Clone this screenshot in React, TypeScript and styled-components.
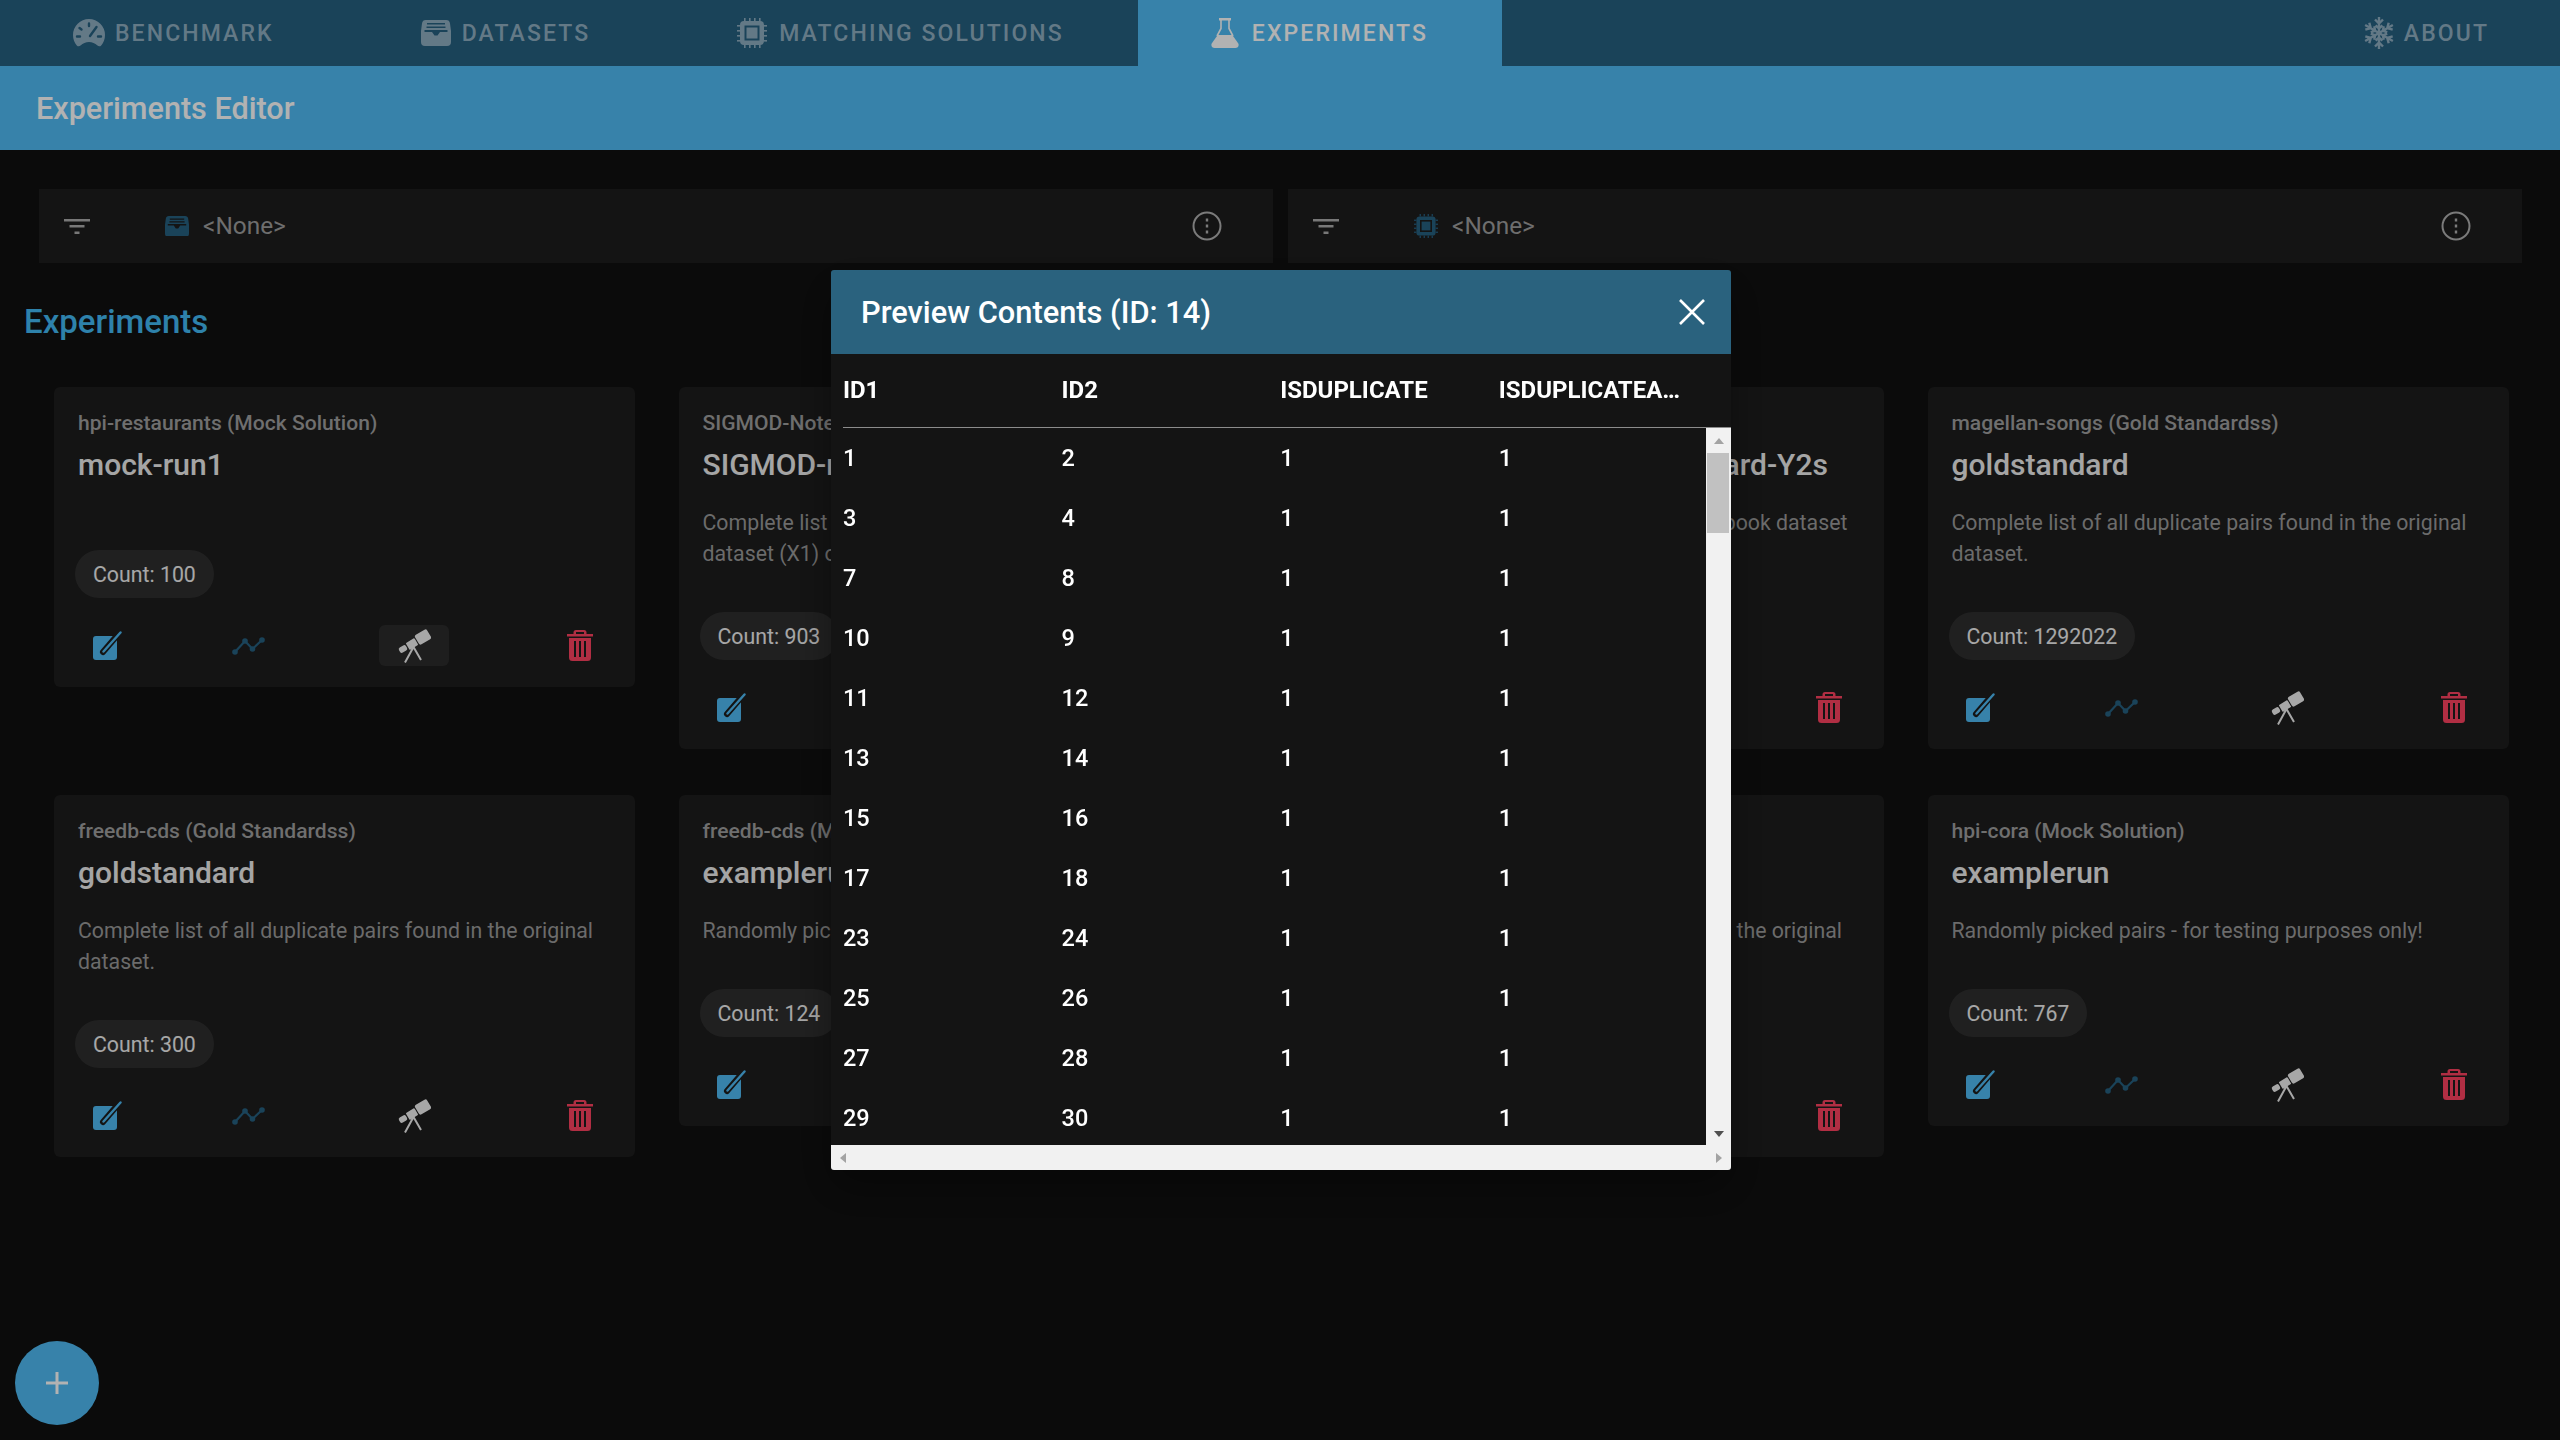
import React, { FC } from 'react'
import styled, { createGlobalStyle } from 'styled-components'

const GlobalStyle = createGlobalStyle`
  html, body {
    margin: 0;
    background: #101010;
    font-family: Roboto, "Liberation Sans", sans-serif;
  }
  * { box-sizing: border-box; }
`

const Page = styled.div`
  position: relative;
  width: 2560px;
  height: 1440px;
  overflow: hidden;
  background: #101010;
`

const Nav = styled.nav`
  display: flex;
  height: 66px;
  background: #266080;
`

const Tab = styled.div<{ $active?: boolean; $right?: boolean; $gap: number }>`
  display: flex;
  align-items: center;
  gap: ${p => p.$gap}px;
  padding: ${p => (p.$right ? '0 71px 0 73px' : '0 74px 0 73px')};
  margin-left: ${p => (p.$right ? 'auto' : '0')};
  background: ${p => (p.$active ? '#4fbbf4' : 'transparent')};
  color: ${p => (p.$active ? '#ffffff' : '#8faec1')};
  font-size: 23px;
  font-weight: 500;
  letter-spacing: 2.1px;
  text-transform: uppercase;
`

const AppBar = styled.header`
  display: flex;
  align-items: center;
  height: 84px;
  padding-left: 36px;
  background: #4fbbf4;
  color: #ffffff;
  font-size: 30.6px;
  font-weight: 500;
`

const FilterRow = styled.div`
  display: grid;
  grid-template-columns: 1234px 1234px;
  gap: 15px;
  margin: 39px 0 0 39px;
`

const FilterBar = styled.div`
  display: flex;
  align-items: center;
  height: 74px;
  padding: 0 51px 0 25px;
  background: #1d1d1d;
  color: #9e9e9e;
  font-size: 24.4px;
`

const FilterLeading = styled.div`
  display: flex;
  width: 101px;
  color: #adadad;
`

const FilterValue = styled.div`
  display: flex;
  align-items: center;
  flex: 1;
  gap: 14px;
`

const FilterLabel = styled.span`
  margin-top: -2px;
`

const SourceIcon = styled.span`
  display: flex;
  color: #266080;
`

const InfoButton = styled.div`
  display: flex;
  color: #b0b0b0;
`

const SectionTitle = styled.h2`
  margin: 39px 0 0 24px;
  color: #42baf5;
  font-size: 33px;
  line-height: 40px;
  font-weight: 500;
`

const CardGrid = styled.div`
  display: grid;
  grid-template-columns: repeat(4, 581px);
  column-gap: 43.5px;
  row-gap: 46px;
  align-items: start;
  margin: 45px 0 0 54px;
`

const Card = styled.article`
  padding: 20px 19px 21px 24px;
  border-radius: 6px;
  background: #1d1d1d;
`

const Overline = styled.div`
  color: #9f9f9f;
  font-size: 21.1px;
  line-height: 32px;
  font-weight: 500;
`

const CardTitle = styled.h3`
  margin: 6px 0 0;
  color: #ededed;
  font-size: 30px;
  line-height: 40px;
  font-weight: 500;
  white-space: nowrap;
`

const Description = styled.p`
  margin: 0;
  padding: 22px 0 43px;
  color: #9a9a9a;
  font-size: 21.3px;
  line-height: 31px;
`

const Chip = styled.div`
  display: inline-flex;
  align-items: center;
  height: 48px;
  margin-left: -3px;
  padding: 0 18px;
  border-radius: 24px;
  background: #2f2f2f;
  color: #f0f0f0;
  font-size: 21.3px;
`

const Actions = styled.div`
  display: grid;
  grid-template-columns: 141px 166px 166px 70px;
  margin: 27px 0 0 -6px;
`

const ActionButton = styled.div<{ $tone: 'edit' | 'chart' | 'view' | 'delete'; $hover?: boolean }>`
  display: flex;
  align-items: center;
  justify-content: center;
  width: 70px;
  height: 41px;
  border-radius: 6px;
  background: ${p => (p.$hover ? '#2b2b2b' : 'transparent')};
  color: ${p =>
    ({ edit: '#4fbbf4', chart: '#266080', view: '#f0f0f0', delete: '#fe4261' })[p.$tone]};
`

const Fab = styled.div`
  position: absolute;
  left: 15px;
  bottom: 15px;
  display: flex;
  align-items: center;
  justify-content: center;
  width: 84px;
  height: 84px;
  border-radius: 50%;
  background: #4fbbf4;
  color: #ffffff;
`

const Backdrop = styled.div`
  position: fixed;
  inset: 0;
  background: rgba(0, 0, 0, 0.3);
`

const Modal = styled.section`
  position: fixed;
  left: 831px;
  top: 270px;
  display: flex;
  flex-direction: column;
  width: 900px;
  height: 900px;
  overflow: hidden;
  border-radius: 3px;
  background: #141414;
  box-shadow: 0 18px 40px rgba(0, 0, 0, 0.35);
`

const ModalHeader = styled.header`
  display: flex;
  align-items: center;
  justify-content: space-between;
  flex: 0 0 84px;
  padding: 0 26px 0 30px;
  background: #2a627e;
  color: #ffffff;
  font-size: 30.8px;
  font-weight: 500;
`

const TableHead = styled.div`
  display: grid;
  grid-template-columns: repeat(4, 218.6px);
  align-items: center;
  flex: 0 0 74px;
  margin-left: 12px;
  padding-bottom: 2px;
  border-bottom: 1px solid #8c8c8c;
  color: #ffffff;
  font-size: 24px;
  font-weight: 700;
`

const HeadCell = styled.div`
  white-space: nowrap;
`

const TableFrame = styled.div`
  display: grid;
  grid-template-columns: 1fr 25px;
  grid-template-rows: 1fr 25px;
  flex: 1;
  min-height: 0;
`

const TableBody = styled.div`
  overflow: hidden;
  padding-left: 12px;
`

const TableRow = styled.div`
  display: grid;
  grid-template-columns: repeat(4, 218.6px);
  align-items: center;
  height: 60px;
  color: #ffffff;
  font-size: 23.5px;
  font-weight: 500;
`

const VScroll = styled.div`
  position: relative;
  display: flex;
  flex-direction: column;
  align-items: center;
  justify-content: space-between;
  padding: 10px 0 8px;
  background: #f1f1f1;
`

const VThumb = styled.div`
  position: absolute;
  top: 25px;
  left: 1px;
  width: 22px;
  height: 80px;
  background: #c1c1c1;
`

const HScroll = styled.div`
  display: flex;
  align-items: center;
  justify-content: space-between;
  grid-column: 1 / 3;
  padding: 0 9px;
  background: #f1f1f1;
`

const arrowWidths = {
  up: '0 5.5px 6px',
  down: '6px 5.5px 0',
  left: '5.5px 6px 5.5px 0',
  right: '5.5px 0 5.5px 6px',
}

const arrowSides = { up: 'bottom', down: 'top', left: 'right', right: 'left' }

const Arrow = styled.span<{ $dir: 'up' | 'down' | 'left' | 'right'; $dark?: boolean }>`
  width: 0;
  height: 0;
  border-style: solid;
  border-color: transparent;
  border-width: ${p => arrowWidths[p.$dir]};
  border-${p => arrowSides[p.$dir]}-color: ${p => (p.$dark ? '#505050' : '#a3a3a3')};
`

const GaugeIcon: FC = () => (
  <svg width="32" height="28" viewBox="0 0 32 28">
    <path
      fill="currentColor"
      d="M16 0A16 16 0 0 0 0 16c0 4 1.4 7.6 3.8 10.4 1 1.2 2.6 1.2 3.7.2C10 24.400 12.800 23 16 23s6 1.400 8.500 3.600c1.100 1 2.700 1 3.700-.2C30.600 23.600 32 20 32 16A16 16 0 0 0 16 0z"
    />
    <g stroke="#266080" strokeWidth="2.4" strokeLinecap="round">
      <path d="M16 4.500v2.500M6.500 9l2 1.500M4 17.500h3M25 17.500h3M23.500 8l-6.500 9" />
    </g>
  </svg>
)

const DatasetIcon: FC<{ size?: number }> = ({ size = 30 }) => (
  <svg width={size} height={(size * 26) / 30} viewBox="0 0 30 26">
    <path
      fill="currentColor"
      fillRule="evenodd"
      d="M5 0h20a4 4 0 0 1 4 3.400L30 11v11a4 4 0 0 1-4 4H4a4 4 0 0 1-4-4V11l1-7.600A4 4 0 0 1 5 0zM6 3v1.600h18V3zM5.500 6.500v1.600h19V6.500zM3.500 10v2H11l2.500 3.500h3L19 12h7.500v-2z"
    />
  </svg>
)

const ChipIcon: FC<{ size?: number }> = ({ size = 30 }) => (
  <svg width={size} height={size} viewBox="0 0 30 30">
    <g fill="currentColor">
      <path
        fillRule="evenodd"
        d="M7 3h16a4 4 0 0 1 4 4v16a4 4 0 0 1-4 4H7a4 4 0 0 1-4-4V7a4 4 0 0 1 4-4zM7.500 7.500v15h15v-15z"
      />
      <rect x="9.500" y="9.500" width="11" height="11" />
      {[7, 12, 17, 22].map(v => (
        <React.Fragment key={v}>
          <rect x={v} y="0" width="1.600" height="3" />
          <rect x={v} y="27" width="1.600" height="3" />
          <rect x="0" y={v} width="3" height="1.600" />
          <rect x="27" y={v} width="3" height="1.600" />
        </React.Fragment>
      ))}
    </g>
  </svg>
)

const FlaskIcon: FC = () => (
  <svg width="28" height="30" viewBox="0 0 28 30">
    <path fill="currentColor" d="M8 0h12v2.500H8z" />
    <path
      fill="none"
      stroke="currentColor"
      strokeWidth="1.600"
      d="M10 2v8.500L6 18M18 2v8.500L22 18"
    />
    <path
      fill="currentColor"
      d="M6.700 17h14.600L27.300 25.500c1 2.300-.5 4.500-3 4.500H3.700c-2.500 0-4-2.200-3-4.500z"
    />
  </svg>
)

const SnowflakeIcon: FC = () => (
  <svg width="30" height="32" viewBox="-15 -16 30 32">
    {[0, 60, 120, 180, 240, 300].map(angle => (
      <path
        key={angle}
        transform={`rotate(${angle})`}
        d="M0 0V-16M-4-13.500L0-9.500L4-13.500M-3.500-7.500L0-4.500L3.500-7.500"
        fill="none"
        stroke="currentColor"
        strokeWidth="2.400"
      />
    ))}
  </svg>
)

const FilterIcon: FC = () => (
  <svg width="26" height="15" viewBox="0 0 26 15">
    <path fill="currentColor" d="M0 0h26v2.400H0zM5.500 6h15v2.400h-15zM10.500 12.500h5V15h-5z" />
  </svg>
)

const InfoIcon: FC = () => (
  <svg width="30" height="30" viewBox="0 0 30 30">
    <circle cx="15" cy="15" r="13.500" fill="none" stroke="currentColor" strokeWidth="2" />
    <path fill="currentColor" d="M13.800 7.500h2.400v3h-2.400zM13.800 13.500h2.400v3h-2.400zM13.800 19.500h2.400v3h-2.400z" />
  </svg>
)

const EditIcon: FC = () => (
  <svg width="29" height="29" viewBox="0 0 29 29">
    <rect x="0" y="5" width="24" height="24" rx="3" fill="currentColor" />
    <path d="M10 21 L22 7" stroke="#1d1d1d" strokeWidth="6" strokeLinecap="round" />
    <path d="M10.500 20.500 L27.500 1.500" stroke="currentColor" strokeWidth="2.400" strokeLinecap="round" />
  </svg>
)

const ChartIcon: FC = () => (
  <svg width="33" height="18" viewBox="0 0 33 18">
    <polyline
      points="3,15 13,4 20.500,12 30,3"
      fill="none"
      stroke="currentColor"
      strokeWidth="2.200"
    />
    <circle cx="3" cy="15" r="2.800" fill="currentColor" />
    <circle cx="13" cy="4" r="2.800" fill="currentColor" />
    <circle cx="20.500" cy="12" r="2.800" fill="currentColor" />
    <circle cx="30" cy="3" r="2.800" fill="currentColor" />
  </svg>
)

const TelescopeIcon: FC = () => (
  <svg width="33" height="34" viewBox="0 0 33 34">
    <g fill="currentColor">
      <rect x="19.500" y="1" width="11" height="14" rx="2" transform="rotate(59 25 8)" />
      <rect x="10" y="10" width="8" height="10" rx="1" transform="rotate(59 14 15)" />
      <rect x="2" y="16" width="6" height="8" rx="2" transform="rotate(59 5 20)" />
    </g>
    <path d="M15.500 18 L7 33.500 M15.500 18 L23 31" stroke="currentColor" strokeWidth="2" fill="none" />
  </svg>
)

const TrashIcon: FC = () => (
  <svg width="26" height="31" viewBox="0 0 26 31">
    <path
      fill="currentColor"
      fillRule="evenodd"
      d="M9 0h8a2.500 2.500 0 0 1 2.500 2.500V4H26v2.500H0V4h6.500V2.500A2.500 2.500 0 0 1 9 0zM9 2v2h8V2zM2 8h22v19.500a3.500 3.500 0 0 1-3.500 3.500h-15A3.500 3.500 0 0 1 2 27.500zM7 11v16h2V11zM12 11v16h2V11zM17 11v16h2V11z"
    />
  </svg>
)

const CloseIcon: FC = () => (
  <svg width="26" height="26" viewBox="0 0 26 26">
    <path d="M1 1 L25 25 M25 1 L1 25" stroke="currentColor" strokeWidth="2.600" />
  </svg>
)

const PlusIcon: FC = () => (
  <svg width="22" height="22" viewBox="0 0 22 22">
    <path fill="currentColor" d="M9.500 0h3v9.500H22v3h-9.500V22h-3v-9.500H0v-3h9.500z" />
  </svg>
)

interface Experiment {
  source: string
  title: string
  description?: string
  count: number
  hover?: boolean
}

const COMPLETE = 'Complete list of all duplicate pairs found in the original dataset.'

const experiments: Experiment[] = [
  { source: 'hpi-restaurants (Mock Solution)', title: 'mock-run1', count: 100, hover: true },
  {
    source: 'SIGMOD-Notebook (Gold Standardss)',
    title: 'SIGMOD-run',
    description: 'Complete list of all duplicate pairs found in the Notebook dataset (X1) of the contest.',
    count: 903,
  },
  {
    source: 'SIGMOD-Notebook (Gold Standardss)',
    title: 'SIGMOD-Notebook-W2-Standard-Y2s',
    description: 'Complete set of duplicate pairs from Notebook dataset (Y2).',
    count: 903,
  },
  { source: 'magellan-songs (Gold Standardss)', title: 'goldstandard', description: COMPLETE, count: 1292022 },
  { source: 'freedb-cds (Gold Standardss)', title: 'goldstandard', description: COMPLETE, count: 300 },
  {
    source: 'freedb-cds (Mock Solution)',
    title: 'examplerun',
    description: 'Randomly picked pairs - for testing purposes only!',
    count: 124,
  },
  { source: 'hpi-cora (Gold Standardss)', title: 'goldstandard', description: COMPLETE, count: 1265 },
  {
    source: 'hpi-cora (Mock Solution)',
    title: 'examplerun',
    description: 'Randomly picked pairs - for testing purposes only!',
    count: 767,
  },
]

const columns = ['ID1', 'ID2', 'ISDUPLICATE', 'ISDUPLICATEA…']

const rows = [
  [1, 2],
  [3, 4],
  [7, 8],
  [10, 9],
  [11, 12],
  [13, 14],
  [15, 16],
  [17, 18],
  [23, 24],
  [25, 26],
  [27, 28],
  [29, 30],
]

const ExperimentCard: FC<{ item: Experiment }> = ({ item }) => (
  <Card>
    <Overline>{item.source}</Overline>
    <CardTitle>{item.title}</CardTitle>
    <Description>{item.description}</Description>
    <Chip>Count: {item.count}</Chip>
    <Actions>
      <ActionButton $tone="edit">
        <EditIcon />
      </ActionButton>
      <ActionButton $tone="chart">
        <ChartIcon />
      </ActionButton>
      <ActionButton $tone="view" $hover={item.hover}>
        <TelescopeIcon />
      </ActionButton>
      <ActionButton $tone="delete">
        <TrashIcon />
      </ActionButton>
    </Actions>
  </Card>
)

const App: FC = () => (
  <Page>
    <GlobalStyle />
    <Nav>
      <Tab $gap={10}>
        <GaugeIcon />
        Benchmark
      </Tab>
      <Tab $gap={11}>
        <DatasetIcon />
        Datasets
      </Tab>
      <Tab $gap={12}>
        <ChipIcon />
        Matching Solutions
      </Tab>
      <Tab $active $gap={13}>
        <FlaskIcon />
        Experiments
      </Tab>
      <Tab $right $gap={10}>
        <SnowflakeIcon />
        About
      </Tab>
    </Nav>
    <AppBar>Experiments Editor</AppBar>
    <FilterRow>
      <FilterBar>
        <FilterLeading>
          <FilterIcon />
        </FilterLeading>
        <FilterValue>
          <SourceIcon>
            <DatasetIcon size={24} />
          </SourceIcon>
          <FilterLabel>&lt;None&gt;</FilterLabel>
        </FilterValue>
        <InfoButton>
          <InfoIcon />
        </InfoButton>
      </FilterBar>
      <FilterBar>
        <FilterLeading>
          <FilterIcon />
        </FilterLeading>
        <FilterValue>
          <SourceIcon>
            <ChipIcon size={24} />
          </SourceIcon>
          <FilterLabel>&lt;None&gt;</FilterLabel>
        </FilterValue>
        <InfoButton>
          <InfoIcon />
        </InfoButton>
      </FilterBar>
    </FilterRow>
    <SectionTitle>Experiments</SectionTitle>
    <CardGrid>
      {experiments.map((item, i) => (
        <ExperimentCard key={i} item={item} />
      ))}
    </CardGrid>
    <Fab>
      <PlusIcon />
    </Fab>
    <Backdrop />
    <Modal>
      <ModalHeader>
        Preview Contents (ID: 14)
        <CloseIcon />
      </ModalHeader>
      <TableHead>
        {columns.map(c => (
          <HeadCell key={c}>{c}</HeadCell>
        ))}
      </TableHead>
      <TableFrame>
        <TableBody>
          {rows.map(([a, b]) => (
            <TableRow key={a}>
              <div>{a}</div>
              <div>{b}</div>
              <div>1</div>
              <div>1</div>
            </TableRow>
          ))}
        </TableBody>
        <VScroll>
          <Arrow $dir="up" />
          <VThumb />
          <Arrow $dir="down" $dark />
        </VScroll>
        <HScroll>
          <Arrow $dir="left" />
          <Arrow $dir="right" />
        </HScroll>
      </TableFrame>
    </Modal>
  </Page>
)

export default App
